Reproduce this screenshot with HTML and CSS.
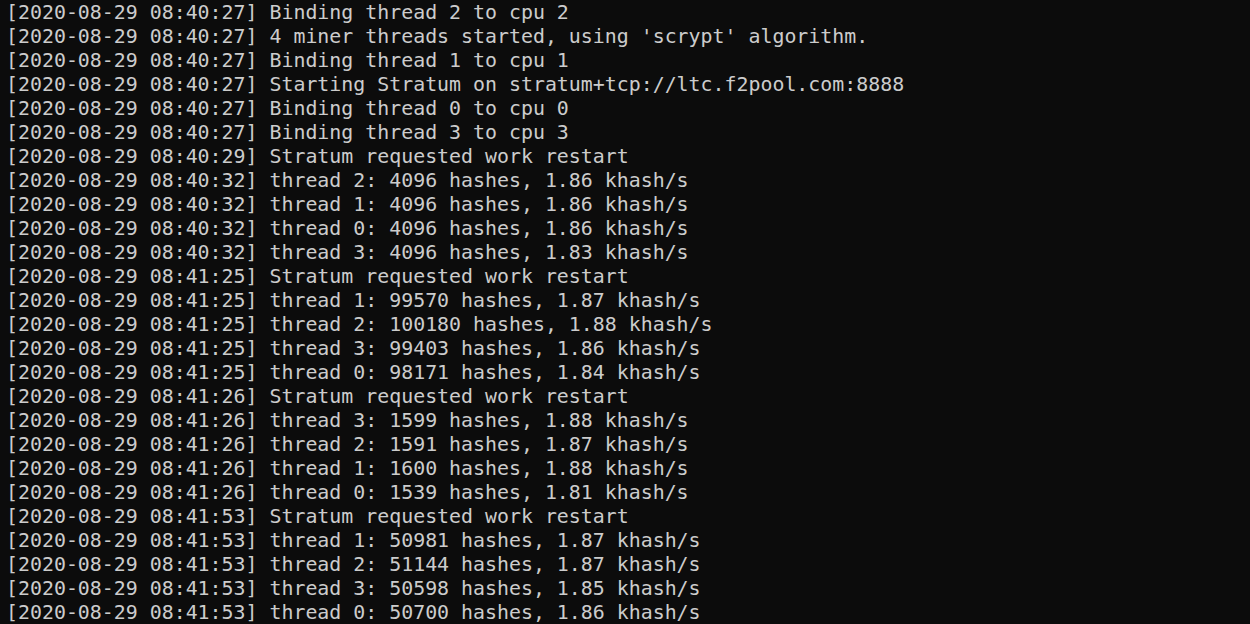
FILE: index.html
```html
<!DOCTYPE html>
<html>
<head>
<meta charset="utf-8">
<link rel="stylesheet" href="styles.css">
</head>
<body>
<pre class="term">[2020-08-29 08:40:27] Binding thread 2 to cpu 2
[2020-08-29 08:40:27] 4 miner threads started, using 'scrypt' algorithm.
[2020-08-29 08:40:27] Binding thread 1 to cpu 1
[2020-08-29 08:40:27] Starting Stratum on stratum+tcp://ltc.f2pool.com:8888
[2020-08-29 08:40:27] Binding thread 0 to cpu 0
[2020-08-29 08:40:27] Binding thread 3 to cpu 3
[2020-08-29 08:40:29] Stratum requested work restart
[2020-08-29 08:40:32] thread 2: 4096 hashes, 1.86 khash/s
[2020-08-29 08:40:32] thread 1: 4096 hashes, 1.86 khash/s
[2020-08-29 08:40:32] thread 0: 4096 hashes, 1.86 khash/s
[2020-08-29 08:40:32] thread 3: 4096 hashes, 1.83 khash/s
[2020-08-29 08:41:25] Stratum requested work restart
[2020-08-29 08:41:25] thread 1: 99570 hashes, 1.87 khash/s
[2020-08-29 08:41:25] thread 2: 100180 hashes, 1.88 khash/s
[2020-08-29 08:41:25] thread 3: 99403 hashes, 1.86 khash/s
[2020-08-29 08:41:25] thread 0: 98171 hashes, 1.84 khash/s
[2020-08-29 08:41:26] Stratum requested work restart
[2020-08-29 08:41:26] thread 3: 1599 hashes, 1.88 khash/s
[2020-08-29 08:41:26] thread 2: 1591 hashes, 1.87 khash/s
[2020-08-29 08:41:26] thread 1: 1600 hashes, 1.88 khash/s
[2020-08-29 08:41:26] thread 0: 1539 hashes, 1.81 khash/s
[2020-08-29 08:41:53] Stratum requested work restart
[2020-08-29 08:41:53] thread 1: 50981 hashes, 1.87 khash/s
[2020-08-29 08:41:53] thread 2: 51144 hashes, 1.87 khash/s
[2020-08-29 08:41:53] thread 3: 50598 hashes, 1.85 khash/s
[2020-08-29 08:41:53] thread 0: 50700 hashes, 1.86 khash/s</pre>
</body>
</html>
```

FILE: styles.css
```css
html, body {
  margin: 0;
  padding: 0;
  background: #0c0c0c;
  height: 100%;
  overflow: hidden;
}
.term {
  margin: 0;
  padding: 1px 0 0 6px;
  font-family: "DejaVu Sans Mono", "Liberation Mono", monospace;
  font-size: 19.9px;
  line-height: 24px;
  color: #cccccc;
  white-space: pre;
}
```
